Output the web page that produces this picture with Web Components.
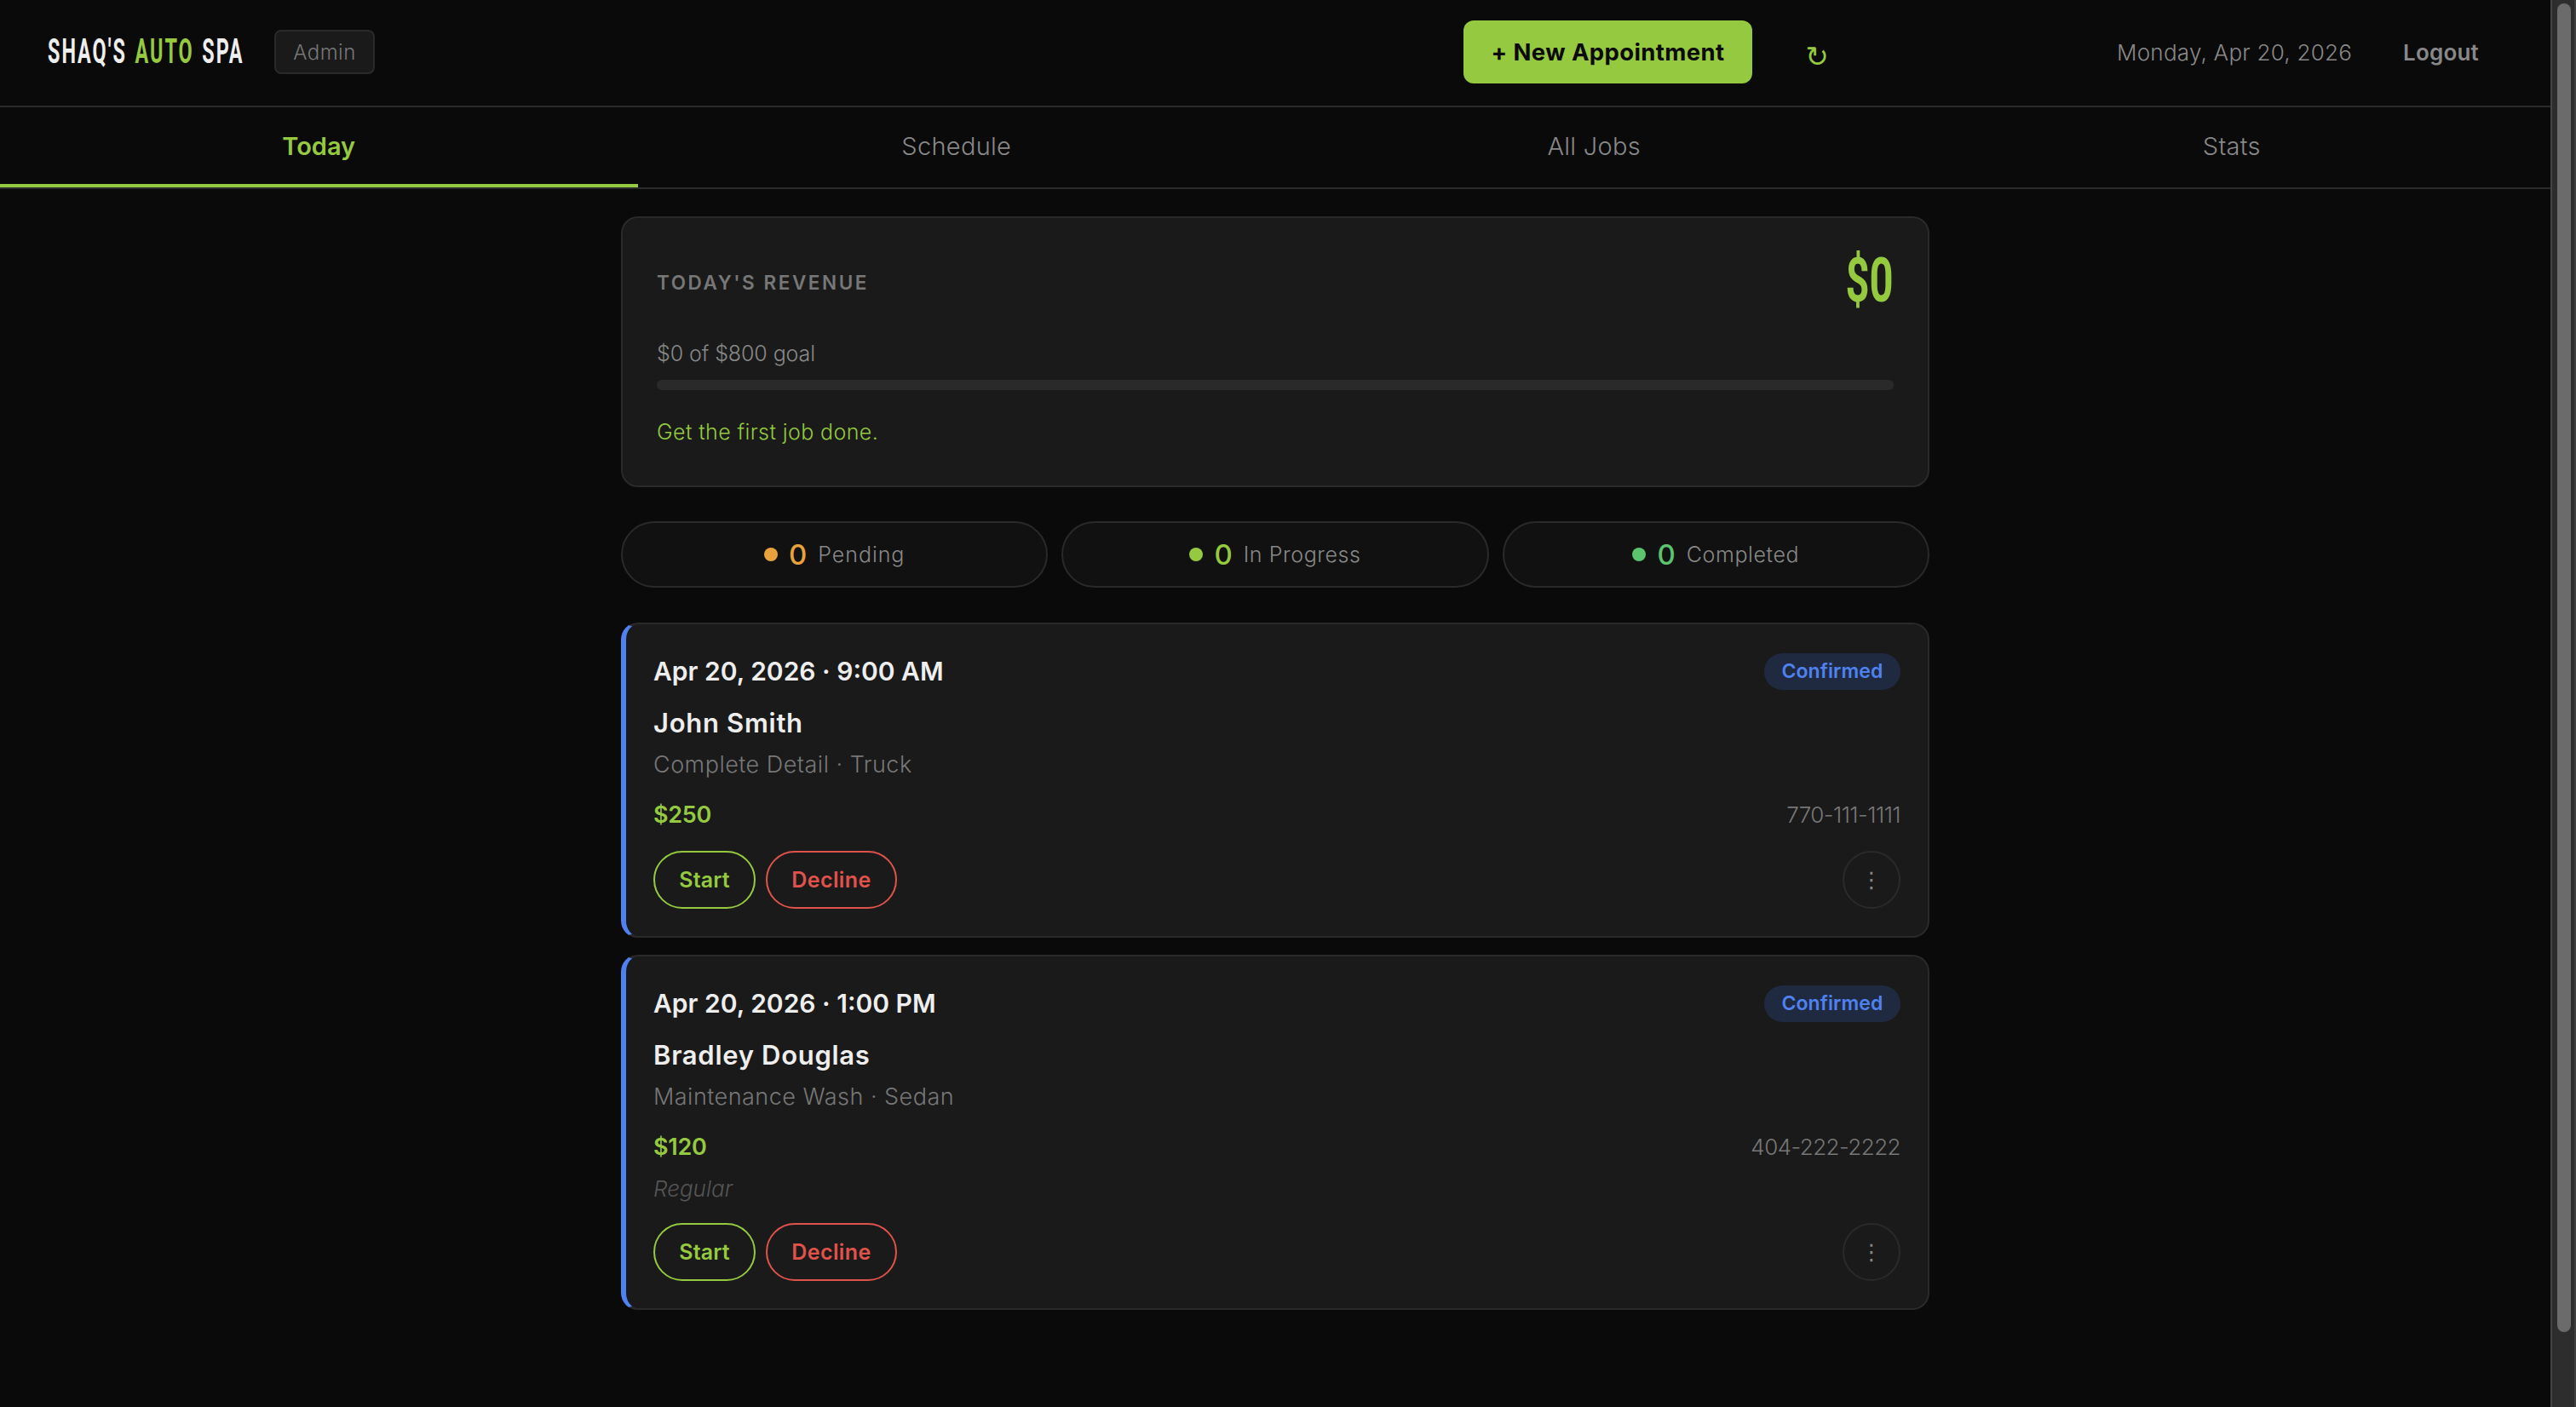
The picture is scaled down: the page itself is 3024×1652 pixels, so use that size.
<!doctype html>
<html lang="en"><head><meta charset="utf-8"><title>Shaq's Auto Spa</title>
<style>
html,body{margin:0;height:100%;background:#0a0a0a;overflow:hidden}
body{font-family:Inter,"Liberation Sans",sans-serif;color:#eee}
</style></head>
<body>
<app-shell>
  <top-bar></top-bar>
  <tab-bar>
    <tab-item active>Today</tab-item>
    <tab-item>Schedule</tab-item>
    <tab-item>All Jobs</tab-item>
    <tab-item>Stats</tab-item>
  </tab-bar>
  <page-main>
    <revenue-card></revenue-card>
    <stat-row>
      <stat-pill color="#e9a23b" style="--ls:.95px">Pending</stat-pill>
      <stat-pill color="#95c93f">In Progress</stat-pill>
      <stat-pill color="#5cc36e">Completed</stat-pill>
    </stat-row>
    <job-card date="Apr 20, 2026 · 9:00 AM" name="John Smith" service="Complete Detail · Truck" price="$250" phone="770-111-1111"></job-card>
    <job-card date="Apr 20, 2026 · 1:00 PM" name="Bradley Douglas" service="Maintenance Wash · Sedan" price="$120" phone="404-222-2222" note="Regular"></job-card>
  </page-main>
</app-shell>
<script>
function def(name, html, setup){
  customElements.define(name, class extends HTMLElement{
    connectedCallback(){
      if(this.shadowRoot) return;
      const r=this.attachShadow({mode:'open'});
      r.innerHTML=html;
      if(setup) setup(this,r);
    }
  });
}
def('app-shell',`<style>
:host{display:grid;grid-template-columns:1fr 30px;height:100vh;overflow:hidden}
.col{min-width:0;display:flex;flex-direction:column}
.sb{box-sizing:border-box;height:100vh;border-left:2px solid #444;border-right:2px solid #3f3f3f;background:#2d2d2d;padding:4px 4px 88px 6px}
.th{height:100%;background:#6b6b6b;border-radius:8px}
</style><div class="col"><slot></slot></div><div class="sb"><div class="th"></div></div>`);

def('top-bar',`<style>
:host{display:flex;align-items:center;box-sizing:border-box;height:126px;border-bottom:2px solid #2a2a2a;padding:0 84px 2px 56px;background:#0a0a0a}
.logo{width:229px;height:46px;flex:none}
.logo span.in{display:inline-block;font:700 40px/46px Roboto,sans-serif;letter-spacing:3.4px;word-spacing:3px;color:#eee;white-space:nowrap;transform:scaleX(.585);transform-origin:0 50%}
.logo b{font-weight:700;color:#95c93f}
.admin{margin-left:37px;box-sizing:border-box;width:118px;height:52px;display:flex;align-items:center;justify-content:center;background:#1a1a1a;border:2px solid #2a2a2a;border-radius:8px;font-size:24px;letter-spacing:.5px;color:#777;font-weight:300}
.new{margin-left:auto;box-sizing:border-box;width:339px;height:74px;display:flex;align-items:center;justify-content:center;background:#95c93f;color:#0a0a0a;border-radius:12px;font-size:27.5px;font-weight:700;letter-spacing:.38px}
.ref{margin-left:64px;width:24px;height:44px;line-height:44px;margin-top:12px;font-family:"DejaVu Sans",sans-serif;font-size:33px;color:#95c93f;display:flex;justify-content:center}
.date{margin-left:340px;font-size:26px;font-weight:300;letter-spacing:.25px;color:#888;white-space:nowrap}
.out{margin-left:60px;font-size:26px;font-weight:600;letter-spacing:.2px;color:#888}
</style>
<div class="logo"><span class="in">SHAQ'S <b>AUTO</b> SPA</span></div>
<div class="admin">Admin</div>
<div class="new">+ New Appointment</div>
<div class="ref">↻</div>
<div class="date">Monday, Apr 20, 2026</div>
<div class="out">Logout</div>`);

def('tab-bar',`<style>
:host{display:grid;grid-template-columns:repeat(4,1fr);height:96px;box-sizing:border-box;border-bottom:2px solid #2a2a2a}
</style><slot></slot>`);

def('tab-item',`<style>
:host{display:flex;align-items:center;justify-content:center;box-sizing:border-box;height:94px;border-bottom:4px solid transparent;font-size:29px;letter-spacing:.3px;font-weight:300;color:#888}
:host([active]){color:#95c93f;font-weight:600;border-bottom-color:#95c93f;letter-spacing:0}
</style><slot></slot>`);

def('page-main',`<style>
:host{display:block;width:1536px;margin:32px auto 0}
</style><slot></slot>`);

def('revenue-card',`<style>
:host{display:block;box-sizing:border-box;height:318px;background:#1a1a1a;border:2px solid #2a2a2a;border-radius:20px;padding:40px 40px 0}
.top{display:flex;justify-content:space-between;align-items:center;height:70px}
.lab{font-size:22.5px;font-weight:600;letter-spacing:2.55px;color:#777}
.amt{font:700 72px/70px Roboto,sans-serif;color:#95c93f;transform:translateY(-1px) scaleX(.68);transform-origin:100% 50%}
.goal{margin-top:31px;height:36px;line-height:36px;font-size:25px;font-weight:300;letter-spacing:-.1px;color:#888}
.bar{margin-top:13px;height:12px;border-radius:6px;background:#2a2a2a}
.msg{margin-top:31px;height:36px;line-height:36px;font-size:25px;font-weight:300;letter-spacing:.4px;color:#95c93f}
</style>
<div class="top"><span class="lab">TODAY'S REVENUE</span><span class="amt">$0</span></div>
<div class="goal">$0 of $800 goal</div>
<div class="bar"></div>
<div class="msg">Get the first job done.</div>`);

def('stat-row',`<style>
:host{display:grid;grid-template-columns:repeat(3,1fr);gap:16px;margin:40px 0 41px}
</style><slot></slot>`);

def('stat-pill',`<style>
:host{display:flex;align-items:center;justify-content:center;box-sizing:border-box;height:78px;background:#111;border:2px solid #2a2a2a;border-radius:39px;gap:13px}
.dot{width:16px;height:16px;border-radius:50%;background:var(--c)}
.n{font-size:33px;font-weight:500;color:var(--c)}
.l{font-size:25px;font-weight:300;letter-spacing:var(--ls,.6px);color:#888}
</style>
<span class="dot"></span><span class="n">0</span><span class="l"><slot></slot></span>`,
(el,r)=>{el.style.setProperty('--c',el.getAttribute('color'))});

def('job-card',`<style>
:host{display:block;box-sizing:border-box;background:#1a1a1a;border:2px solid #2a2a2a;border-left:6px solid #4f82f0;border-radius:20px;padding:32px;margin-bottom:20px}
.row{display:flex;justify-content:space-between;align-items:center}
.date{height:46px}
.d{font-size:30px;font-weight:600;color:#eee}
.badge{box-sizing:border-box;height:43px;width:160px;display:flex;align-items:center;justify-content:center;border-radius:22px;background:#1f2a40;color:#4f82f0;font-size:23px;font-weight:600;letter-spacing:.1px}
.name{margin-top:16px;height:44px;line-height:44px;font-size:31px;font-weight:600;letter-spacing:.7px;color:#eee}
.svc{margin-top:9px;height:36px;line-height:36px;font-size:27px;font-weight:300;letter-spacing:.48px;color:#777}
.money{margin-top:20px;height:40px}
.p{font-size:27px;font-weight:600;letter-spacing:-.3px;color:#95c93f}
.ph{font-size:26px;font-weight:300;letter-spacing:-.55px;color:#777}
.note{padding-top:13px;height:34px;line-height:34px;font-size:26px;font-weight:300;font-style:italic;letter-spacing:0;color:#555}
.act{margin-top:23px;align-items:flex-start}
.btns{display:flex;gap:12px}
.b{box-sizing:border-box;height:68px;display:flex;align-items:center;justify-content:center;border-radius:34px;border:2px solid;font-size:25px;font-weight:600;letter-spacing:.1px}
.s{width:120px;color:#95c93f;border-color:#95c93f}
.x{width:154px;color:#e0524c;border-color:#e0524c;letter-spacing:.4px}
.m{box-sizing:border-box;width:68px;height:68px;border-radius:50%;border:2px solid #2a2a2a;display:flex;align-items:center;justify-content:center;font:26px "DejaVu Sans",sans-serif;color:#888}
</style>
<div class="row date"><span class="d"></span><span class="badge">Confirmed</span></div>
<div class="name"></div>
<div class="svc"></div>
<div class="row money"><span class="p"></span><span class="ph"></span></div>
<div class="note" hidden></div>
<div class="row act"><div class="btns"><div class="b s">Start</div><div class="b x">Decline</div></div><div class="m">⋮</div></div>`,
(el,r)=>{
  const q=s=>r.querySelector(s),a=n=>el.getAttribute(n);
  q('.d').textContent=a('date');q('.name').textContent=a('name');q('.svc').textContent=a('service');
  q('.p').textContent=a('price');q('.ph').textContent=a('phone');
  const n=q('.note');if(a('note')){n.textContent=a('note');n.hidden=false}else{n.remove()}
});
</script>
</body></html>
